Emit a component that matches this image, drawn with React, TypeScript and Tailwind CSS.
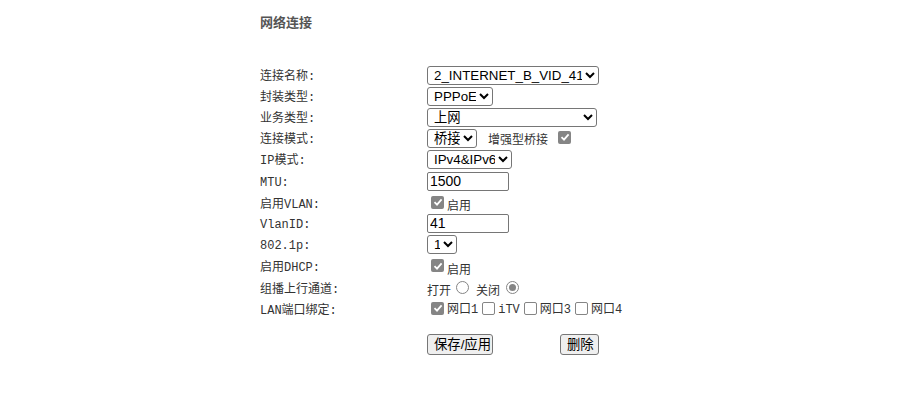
import React from 'react';

const labelFont = { fontFamily: '"Liberation Mono", "Noto Sans CJK SC", monospace' };

const selectCls =
  'h-[19px] border border-[#767676] rounded-[3px] bg-white text-black text-[13.33px] pl-[2px] font-["Liberation_Sans","Noto_Sans_CJK_SC",sans-serif]';
const inputCls =
  'h-[19px] w-[82px] border border-[#767676] rounded-[2px] bg-white text-black text-[14px] px-[2px] font-["Liberation_Sans",sans-serif]';
const btnCls =
  'h-[21px] whitespace-nowrap border border-[#767676] rounded-[3px] bg-[#efefef] text-black text-[13.33px] px-[6px] font-["Liberation_Sans","Noto_Sans_CJK_SC",sans-serif]';

interface RowProps {
  label: string;
  h: string;
  children: React.ReactNode;
}

const Row: React.FC<RowProps> = ({ label, h, children }) => (
  <div className={`flex items-center ${h}`}>
    <div className="w-[167px] text-[12px] text-[#333] pt-[3px]" style={labelFont}>{label}</div>
    <div className="flex items-center">{children}</div>
  </div>
);

// disabled checkbox look: grey fill with white tick, or empty grey-bordered box
const Check: React.FC<{ checked?: boolean; cls?: string }> = ({ checked, cls = 'ml-[4px] mr-[3px]' }) =>
  checked ? (
    <span className={`${cls} inline-flex w-[13px] h-[13px] rounded-[2px] bg-[#858585] items-center justify-center`}>
      <svg width="10" height="10" viewBox="0 0 10 10">
        <path d="M1.5 5.2 L4 7.6 L8.6 2.4" fill="none" stroke="#fff" strokeWidth="1.8" />
      </svg>
    </span>
  ) : (
    <span className={`${cls} inline-block w-[13px] h-[13px] rounded-[2px] border border-[#858585] bg-white`} />
  );

const Radio: React.FC<{ checked?: boolean; cls: string }> = ({ checked, cls }) => (
  <span className={`${cls} inline-flex w-[13px] h-[13px] rounded-full border border-[#858585] bg-white items-center justify-center`}>
    {checked && <span className="w-[7px] h-[7px] rounded-full bg-[#858585]" />}
  </span>
);

const cjk = 'text-[12px] text-[#333] font-["Noto_Sans_CJK_SC",sans-serif]';

export default function App() {
  return (
    <div className="w-[909px] h-[407px] bg-white pl-[260px] pt-[14px]">
      <h3 className="text-[13px] font-bold text-[#555] leading-[16px] font-['Noto_Sans_CJK_SC',sans-serif]">网络连接</h3>
      <div className="mt-[35px] flex flex-col">
        <Row label="连接名称:" h="h-[21px]">
          <select className={`${selectCls} w-[172px]`} defaultValue="a">
            <option value="a">2_INTERNET_B_VID_41</option>
          </select>
        </Row>
        <Row label="封装类型:" h="h-[21px]">
          <select className={`${selectCls} w-[66px]`} defaultValue="a">
            <option value="a">PPPoE</option>
          </select>
        </Row>
        <Row label="业务类型:" h="h-[21px]">
          <select className={`${selectCls} w-[170px]`} defaultValue="a">
            <option value="a">上网</option>
          </select>
        </Row>
        <Row label="连接模式:" h="h-[21px]">
          <select className={`${selectCls} w-[50px]`} defaultValue="a">
            <option value="a">桥接</option>
          </select>
          <span className="ml-[11px] text-[12px] text-[#333] font-['Noto_Sans_CJK_SC',sans-serif]">增强型桥接</span>
          <Check checked cls="ml-[10px] mb-[3px]" />
        </Row>
        <Row label="IP模式:" h="h-[21px]">
          <select className={`${selectCls} w-[85px]`} defaultValue="a">
            <option value="a">IPv4&amp;IPv6</option>
          </select>
        </Row>
        <Row label="MTU:" h="h-[23px]">
          <input className={inputCls} defaultValue="1500" />
        </Row>
        <Row label="启用VLAN:" h="h-[20px]">
          <Check checked cls="ml-[4px] mr-[3px] mb-[2px]" />
          <span className={`${cjk} mt-[4px]`}>启用</span>
        </Row>
        <Row label="VlanID:" h="h-[21px]">
          <input className={inputCls} defaultValue="41" />
        </Row>
        <Row label="802.1p:" h="h-[21px]">
          <select className={`${selectCls} w-[30px]`} defaultValue="a">
            <option value="a">1</option>
          </select>
        </Row>
        <Row label="启用DHCP:" h="h-[23px]">
          <Check checked cls="ml-[4px] mr-[3px] mb-[2px]" />
          <span className={`${cjk} mt-[4px]`}>启用</span>
        </Row>
        <Row label="组播上行通道:" h="h-[20px]">
          <span className={`${cjk} mt-[3px]`}>打开</span>
          <Radio cls="ml-[5px] mr-[7px] mb-[2px]" />
          <span className={`${cjk} mt-[3px]`}>关闭</span>
          <Radio checked cls="ml-[6px] mb-[2px]" />
        </Row>
        <Row label="LAN端口绑定:" h="h-[22px]">
          <Check checked cls="ml-[4px] mr-[3px] mb-[2px]" />
          <span className="text-[12px] text-[#333] mt-[2px]" style={labelFont}>网口1</span>
          <Check cls="ml-[4px] mr-[3px] mb-[2px]" />
          <span className="text-[12px] text-[#333] mt-[2px]" style={labelFont}>iTV</span>
          <Check cls="ml-[4px] mr-[3px] mb-[2px]" />
          <span className="text-[12px] text-[#333] mt-[2px]" style={labelFont}>网口3</span>
          <Check cls="ml-[4px] mr-[3px] mb-[2px]" />
          <span className="text-[12px] text-[#333] mt-[2px]" style={labelFont}>网口4</span>
        </Row>
        <div className="flex items-center mt-[14px] pl-[167px]">
          <button className={`${btnCls} w-[66px] px-0`}>保存/应用</button>
          <button className={`${btnCls} w-[39px] px-0 ml-[67px]`}>删除</button>
        </div>
      </div>
    </div>
  );
}
